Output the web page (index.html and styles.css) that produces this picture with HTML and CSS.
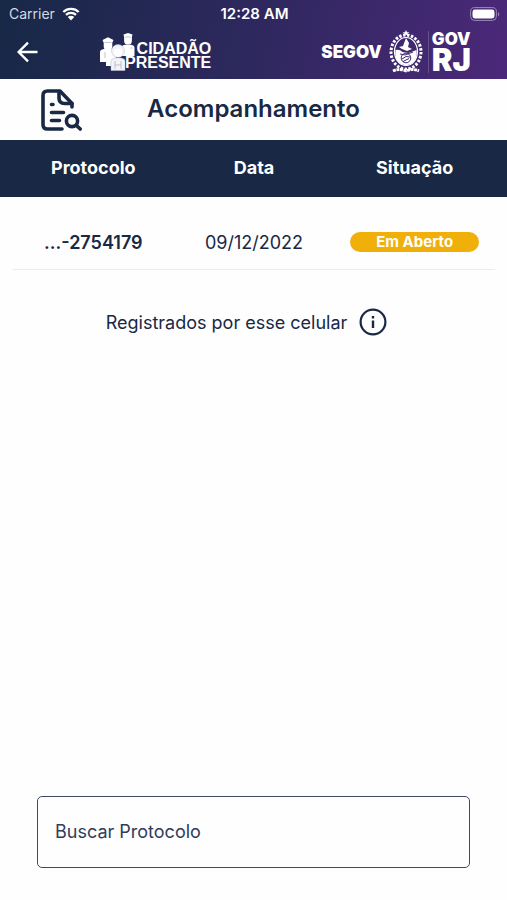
FILE: index.html
```
<!DOCTYPE html>
<html lang="pt-BR">
  <head>
    <meta charset="utf-8">
    <meta name="viewport" content="width=device-width, initial-scale=1">
    <title>Acompanhamento</title>
    <link rel="stylesheet" href="styles.css">
  </head>
  <body>
    <header class="header">
      <div class="status-bar">
        <span class="carrier">Carrier
          <svg class="wifi" viewBox="0 0 18 14" width="18" height="14">
            <path d="M1.3 5a11 11 0 0 1 15.4 0M4 7.9a7.2 7.2 0 0 1 10 0" fill="none" stroke="#fff" stroke-width="2.3"/>
            <path d="M9 13.4 5.8 10.1a4.6 4.6 0 0 1 6.4 0z" fill="#fff"/>
          </svg>
        </span>
        <time class="clock">12:28 AM</time>
        <svg class="battery" viewBox="0 0 30 14" width="30" height="14">
          <rect x=".6" y=".6" width="25.8" height="12.8" rx="4" fill="none" stroke="#9c8ab8"/>
          <rect x="2.5" y="2.5" width="22" height="9" rx="2.4" fill="#fff"/>
          <path d="M28 5v4.4a2.6 2.6 0 0 0 0-4.4z" fill="#9c8ab8"/>
        </svg>
      </div>
      <div class="nav">
        <button class="back" type="button" aria-label="Voltar">
          <svg viewBox="0 0 22 22" width="22" height="22">
            <path d="M20.5 11H1.8M11 1.6 1.6 11l9.4 9.4" fill="none" stroke="#fff" stroke-width="2.4"/>
          </svg>
        </button>
        <div class="logo-cidadao">
          <svg viewBox="0 0 38 38" width="38" height="38">
            <g fill="#fff">
              <path d="M23.5 1.500 28 0l4.500 1.500-.6 2.600v3.600a3.900 3.900 0 0 1-7.800 0V4.100z"/>
              <path d="M21 23V15q0-2.500 4-3.200h6q3.500.5 3.500 3.200v8z"/>
              <path d="M2.500 7 8 4.300 13.500 7l-1.200 2.800v3.700a4.300 4.300 0 0 1-8.600 0V9.800z"/>
              <path d="M0 28V19q0-2.500 4-3h8q4 .5 4 3v14H6v-4H0z"/>
            </g>
            <g fill="#f3f3f8" stroke="#b9bac9" stroke-width=".5">
              <circle cx="18" cy="18" r="6.500"/>
              <path d="M11 37.500V28q0-2.500 4-3h6q4 .5 4 3v9.500z"/>
            </g>
            <circle cx="18" cy="19.500" r="4" fill="#fff"/>
            <path d="M4.500 9.500h7M25 4h6M30.500 15h2M5 19v6M15 28v8M21 28v8M15 32h6" fill="none" stroke="#a9abc0" stroke-width=".7"/>
          </svg>
          <div class="logo-text">
            <span>CIDADÃO</span>
            <span>PRESENTE</span>
          </div>
        </div>
        <div class="logo-gov">
          <span class="segov">SEGOV</span>
          <svg class="crest" viewBox="0 0 36 44" width="36" height="44">
            <g fill="none" stroke="#fff">
              <ellipse cx="18" cy="22" rx="15" ry="17" stroke-width="3" stroke-dasharray="2.500 1.500"/>
              <ellipse cx="18" cy="21.500" rx="11.500" ry="14" stroke-width="1.200"/>
              <path d="M5 41q6-3 13 0 7-3 13 0" stroke-width="2.800" stroke-dasharray="3 .6"/>
            </g>
            <path d="m18 0 1 2.200h2.400l-2 1.500.8 2.300L18 4.600 15.800 6l.8-2.300-2-1.500H17z" fill="#fff"/>
            <path d="m11 17 4-1 3-8 3 5-1 4 4 2-5 2-5-2z" fill="#fff"/>
            <path d="M7.500 20q4-1 7 2l6 1 8-3q1 8-3 12-3 3-7.500 3.500-4.500-.5-7.500-3.500-4-4-3-12z" fill="#fff"/>
            <circle cx="18" cy="28" r="4.800" fill="none" stroke="#3d286d"/>
            <path d="M14 29q4-4 8-2M15 31.500l6-3M12 24l5 1 8-3" fill="none" stroke="#3d286d"/>
          </svg>
          <div class="gov-rj">
            <span class="gov">GOV</span>
            <span class="rj">RJ</span>
          </div>
        </div>
      </div>
    </header>

    <main class="main">
      <div class="title">
        <svg class="title-icon" viewBox="0 0 42 42" width="42" height="42">
          <g fill="none" stroke="#182845" stroke-width="3.600" stroke-linecap="round" stroke-linejoin="round">
            <path d="M31 18v-3.500L19 2H6.500Q2 2 2 6.500v29Q2 40 6.500 40H21"/>
            <path d="M18 2.500V9q0 5.500 5.500 5.500H31"/>
            <path d="M10.500 15.500h1.500M10.500 23.500h12M10.500 31.500h8"/>
            <circle cx="31" cy="32" r="5.600"/>
            <path d="m35.500 36.500 3.700 3.500"/>
          </g>
        </svg>
        <h1>Acompanhamento</h1>
      </div>

      <table class="protocols">
        <thead>
          <tr>
            <th scope="col">Protocolo</th>
            <th scope="col">Data</th>
            <th scope="col">Situação</th>
          </tr>
        </thead>
        <tbody>
          <tr>
            <td class="number">...-2754179</td>
            <td>09/12/2022</td>
            <td><span class="badge">Em Aberto</span></td>
          </tr>
        </tbody>
      </table>

      <div class="registered">
        <span>Registrados por esse celular</span>
        <button class="info" type="button" aria-label="Informações">
          <svg viewBox="0 0 28 28" width="28" height="28">
            <circle cx="14" cy="14" r="12.400" fill="none" stroke="#182845" stroke-width="2.200"/>
            <path d="M14 12.500V20M14 8v2.400" fill="none" stroke="#182845" stroke-width="2.400"/>
          </svg>
        </button>
      </div>

      <form class="search">
        <input type="text" placeholder="Buscar Protocolo" aria-label="Buscar Protocolo">
      </form>
    </main>
  </body>
</html>
```
FILE: styles.css
```
* {
  box-sizing: border-box;
}

body {
  margin: 0;
  min-height: 100vh;
  display: flex;
  flex-direction: column;
  font-family: Inter, sans-serif;
  font-size: 18px;
  color: #182845;
  background: #fefefe;
}

button {
  padding: 0;
  border: 0;
  background: none;
  cursor: pointer;
}

svg {
  display: block;
}

.header {
  height: 79px;
  color: #fff;
  background: linear-gradient(100deg, #172847 0%, #2e285e 50%, #4c287a 100%);
}

.status-bar {
  display: grid;
  grid-template-columns: 1fr auto 1fr;
  align-items: center;
  height: 27px;
  padding: 0 7px 0 9px;
  font-size: 14px;
}

.carrier {
  display: flex;
  align-items: center;
  gap: 7px;
  color: #d5d9e2;
}

.clock {
  font-size: 15px;
  font-weight: 600;
}

.battery {
  justify-self: end;
}

.nav {
  display: flex;
  align-items: center;
  height: 50px;
  padding: 0 36px 0 17px;
}

.logo-cidadao {
  display: flex;
  align-items: center;
  margin-left: 61px;
}

.logo-text {
  display: flex;
  flex-direction: column;
  padding-top: 8px;
  margin-left: -13px;
  font-family: "Liberation Sans", sans-serif;
  font-size: 16px;
  font-weight: bold;
  line-height: 14px;
  text-align: right;
}

.logo-gov {
  display: flex;
  align-items: center;
  margin-left: auto;
}

.segov {
  font-size: 17px;
  font-weight: 900;
}

.crest {
  margin: 0 4px 0 6px;
}

.gov-rj {
  display: flex;
  flex-direction: column;
  padding-left: 3px;
  border-left: 1px solid #67518c;
  font-weight: 900;
}

.gov {
  font-size: 17px;
  line-height: 16px;
}

.rj {
  font-size: 31px;
  line-height: 26px;
}

.main {
  display: flex;
  flex: 1;
  flex-direction: column;
}

.title {
  display: grid;
  grid-template-columns: 1fr auto 1fr;
  align-items: center;
  height: 61px;
}

.title-icon {
  margin-left: 41px;
}

.title h1 {
  margin: 0;
  padding-bottom: 2px;
  font-size: 24px;
  font-weight: 600;
}

.protocols {
  display: block;
}

.protocols thead,
.protocols tbody {
  display: block;
  padding: 0 12px 0 13px;
}

.protocols thead {
  color: #fff;
  background: #182845;
}

.protocols tr {
  display: grid;
  grid-template-columns: repeat(3, 1fr);
  align-items: center;
  text-align: center;
}

.protocols thead tr {
  height: 57px;
  padding-bottom: 2px;
}

.protocols tbody tr {
  height: 73px;
  padding-top: 18px;
  border-bottom: 1px solid #ececee;
}

.protocols th,
.protocols td {
  padding: 0;
}

.protocols .number {
  font-weight: 600;
}

.badge {
  display: block;
  margin: 0 16px;
  border-radius: 10px;
  font-size: 15px;
  font-weight: 700;
  line-height: 20px;
  color: #fff;
  background: #f1af09;
}

.registered {
  display: flex;
  align-items: center;
  justify-content: center;
  gap: 12px;
  margin-top: 38px;
  padding-right: 14px;
}

.search {
  margin: auto 37px 32px;
}

.search input {
  width: 100%;
  height: 72px;
  padding: 0 17px 2px;
  border: 1px solid #3f4a63;
  border-radius: 5px;
  font: inherit;
  color: inherit;
  background: none;
}

.search input::placeholder {
  color: #303c5a;
  opacity: 1;
}
```
